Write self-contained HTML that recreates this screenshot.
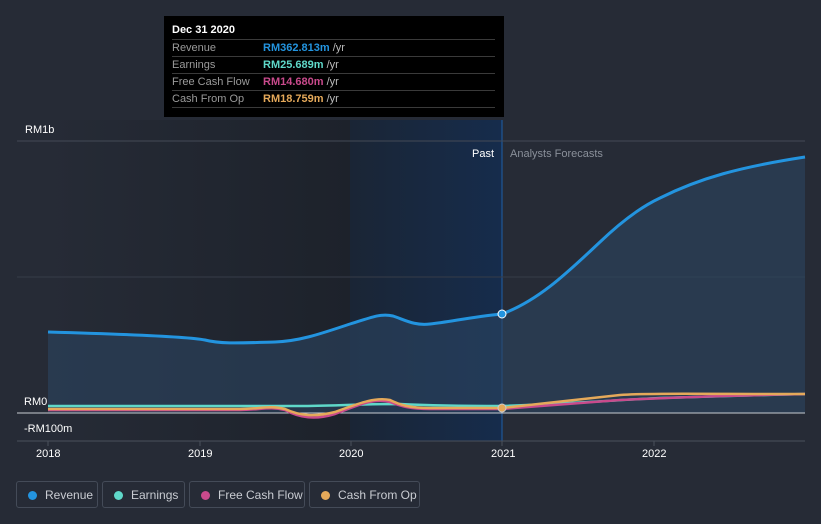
<!DOCTYPE html>
<html><head><meta charset="utf-8"><style>
body{margin:0;width:821px;height:524px;background:#262b36;font-family:"Liberation Sans",sans-serif;overflow:hidden;position:relative}
.t{position:absolute;color:#fff;font-size:11px}
.tip{position:absolute;left:164px;top:16px;width:340px;height:101px;background:#000;}
.tip .h{position:absolute;left:8px;top:8px;color:#fff;font-weight:bold;font-size:11px}
.row{position:absolute;left:8px;width:323px;height:16px;border-top:1px solid #3a3a3a;font-size:11px;color:#9a9a9a;line-height:16px}
.row b{position:absolute;left:91px;font-weight:bold}
.row span{color:#bbb;font-weight:normal}
.leg{position:absolute;top:481px;height:27px;border:1px solid #444b58;border-radius:3px;color:#c9ccd2;font-size:12px;line-height:27px;box-sizing:border-box}
.leg i{position:absolute;left:11px;top:9px;width:9px;height:9px;border-radius:50%}
.leg em{font-style:normal;position:absolute;left:28px}
</style></head><body>
<svg width="821" height="524" style="position:absolute;left:0;top:0">
<defs><linearGradient id="pg" x1="0" x2="1"><stop offset="0" stop-color="#262b36"/><stop offset="1" stop-color="#1d222b"/></linearGradient>
<linearGradient id="hg" x1="0" x2="1"><stop offset="0" stop-color="#1a2535"/><stop offset="1" stop-color="#162c4c"/></linearGradient></defs>
<rect x="48" y="120" width="302" height="321" fill="url(#pg)"/>
<rect x="350" y="120" width="152" height="321" fill="url(#hg)"/>
<line x1="502" y1="120" x2="502" y2="441" stroke="#1f5fa8" stroke-width="1"/>
<line x1="17" y1="141" x2="805" y2="141" stroke="#444a56"/>
<line x1="17" y1="277" x2="805" y2="277" stroke="#363c48"/>
<line x1="17" y1="441" x2="805" y2="441" stroke="#4a505c"/>
<path d="M48,332 C120,334 190,337 205,340 C220,344 240,343 275,342 C300,341 320,334 350,324 C370,318 380,313 393,316 C405,320 415,326 430,324 C450,322 470,317 502,314 C540,300 570,270 600,242 C625,218 645,205 660,198 C700,178 740,167 805,157 L805,413 L48,413Z" fill="#2c4560" opacity="0.6"/>
<line x1="17" y1="413" x2="805" y2="413" stroke="#c8ccd2" stroke-width="1"/>
<path d="M48,406 L300,406 C330,406 360,404 400,404 C440,406 470,406 502,406 C560,404 620,400 660,398 C720,396 760,395 805,394" fill="none" stroke="#5fd8c9" stroke-width="2.5"/>
<path d="M48,410 L240,410 C260,410 270,406 285,410 C300,418 315,420 335,414 C360,404 375,398 390,402 C400,406 410,409 430,409 L502,409 C540,406 580,403 620,400 C700,396 760,395 805,394" fill="none" stroke="#c94a8c" stroke-width="2.5"/>
<path d="M48,409 L240,409 C260,409 270,405 285,409 C300,416 315,417 335,412 C360,403 375,397 390,400 C400,405 410,408 430,408 L502,408 C540,404 590,398 620,395 C650,393 700,394 805,394" fill="none" stroke="#e5a95a" stroke-width="2.5"/>
<path d="M48,332 C120,334 190,337 205,340 C220,344 240,343 275,342 C300,341 320,334 350,324 C370,318 380,313 393,316 C405,320 415,326 430,324 C450,322 470,317 502,314 C540,300 570,270 600,242 C625,218 645,205 660,198 C700,178 740,167 805,157" fill="none" stroke="#2394df" stroke-width="3"/>
<circle cx="502" cy="314" r="4" fill="#2394df" stroke="#fff" stroke-width="1"/>
<circle cx="502" cy="408" r="4" fill="#e5a95a" stroke="#ccc" stroke-width="1"/>
<g stroke="#4a505c"><line x1="48" y1="441" x2="48" y2="446"/><line x1="200" y1="441" x2="200" y2="446"/><line x1="351" y1="441" x2="351" y2="446"/><line x1="502" y1="441" x2="502" y2="446"/><line x1="654" y1="441" x2="654" y2="446"/></g>
</svg>
<div class="t" style="left:25px;top:124px">RM1b</div>
<div class="t" style="left:24px;top:396px">RM0</div>
<div class="t" style="left:24px;top:423px">-RM100m</div>
<div class="t" style="left:472px;top:148px">Past</div>
<div class="t" style="left:510px;top:148px;color:#8a909a">Analysts Forecasts</div>
<div class="t" style="left:36px;top:448px">2018</div>
<div class="t" style="left:188px;top:448px">2019</div>
<div class="t" style="left:339px;top:448px">2020</div>
<div class="t" style="left:491px;top:448px">2021</div>
<div class="t" style="left:642px;top:448px">2022</div>
<div class="tip"><div class="h">Dec 31 2020</div>
<div class="row" style="top:23px">Revenue<b style="color:#2394df">RM362.813m <span>/yr</span></b></div>
<div class="row" style="top:40px">Earnings<b style="color:#5fd8c9">RM25.689m <span>/yr</span></b></div>
<div class="row" style="top:57px">Free Cash Flow<b style="color:#c94a8c">RM14.680m <span>/yr</span></b></div>
<div class="row" style="top:74px;border-bottom:1px solid #3a3a3a">Cash From Op<b style="color:#e5a95a">RM18.759m <span>/yr</span></b></div>
</div>
<div class="leg" style="left:16px;width:82px"><i style="background:#2394df"></i><em>Revenue</em></div>
<div class="leg" style="left:102px;width:83px"><i style="background:#5fd8c9"></i><em>Earnings</em></div>
<div class="leg" style="left:189px;width:116px"><i style="background:#c94a8c"></i><em>Free Cash Flow</em></div>
<div class="leg" style="left:309px;width:111px"><i style="background:#e5a95a"></i><em>Cash From Op</em></div>
</body></html>
